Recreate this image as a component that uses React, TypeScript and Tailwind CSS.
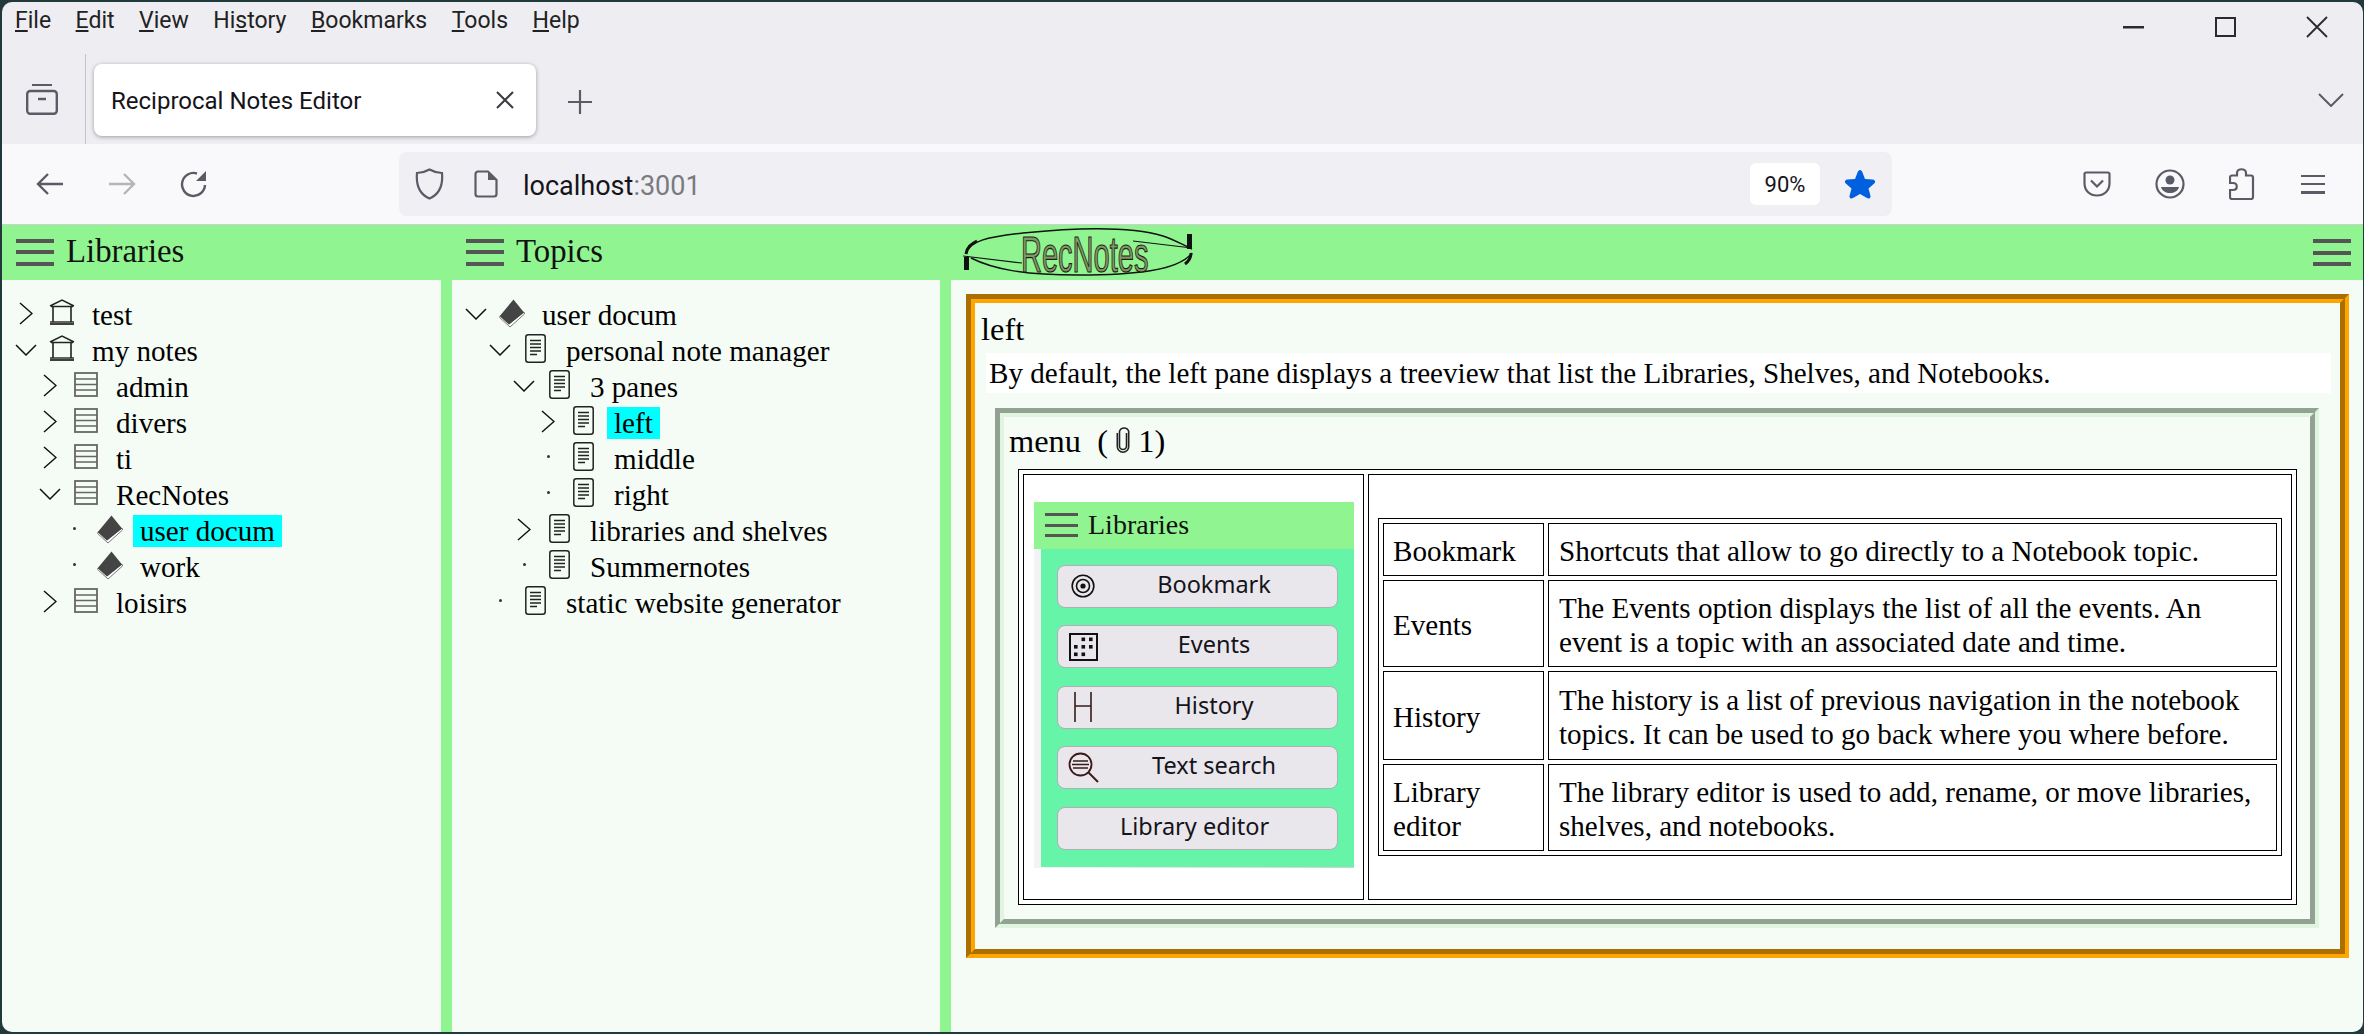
import React from 'react';

type TreeRow = {
  level: number;
  label: string;
  icon: 'library' | 'shelf' | 'book' | 'doc';
  state: 'open' | 'closed' | 'leaf';
  selected?: boolean;
};

const libraries: TreeRow[] = [
  { level: 0, label: 'test', icon: 'library', state: 'closed' },
  { level: 0, label: 'my notes', icon: 'library', state: 'open' },
  { level: 1, label: 'admin', icon: 'shelf', state: 'closed' },
  { level: 1, label: 'divers', icon: 'shelf', state: 'closed' },
  { level: 1, label: 'ti', icon: 'shelf', state: 'closed' },
  { level: 1, label: 'RecNotes', icon: 'shelf', state: 'open' },
  { level: 2, label: 'user docum', icon: 'book', state: 'leaf', selected: true },
  { level: 2, label: 'work', icon: 'book', state: 'leaf' },
  { level: 1, label: 'loisirs', icon: 'shelf', state: 'closed' },
];

const topics: TreeRow[] = [
  { level: 0, label: 'user docum', icon: 'book', state: 'open' },
  { level: 1, label: 'personal note manager', icon: 'doc', state: 'open' },
  { level: 2, label: '3 panes', icon: 'doc', state: 'open' },
  { level: 3, label: 'left', icon: 'doc', state: 'closed', selected: true },
  { level: 3, label: 'middle', icon: 'doc', state: 'leaf' },
  { level: 3, label: 'right', icon: 'doc', state: 'leaf' },
  { level: 2, label: 'libraries and shelves', icon: 'doc', state: 'closed' },
  { level: 2, label: 'Summernotes', icon: 'doc', state: 'leaf' },
  { level: 1, label: 'static website generator', icon: 'doc', state: 'leaf' },
];

const menuItems = [
  { pre: '', key: 'F', post: 'ile' },
  { pre: '', key: 'E', post: 'dit' },
  { pre: '', key: 'V', post: 'iew' },
  { pre: 'Hi', key: 's', post: 'tory' },
  { pre: '', key: 'B', post: 'ookmarks' },
  { pre: '', key: 'T', post: 'ools' },
  { pre: '', key: 'H', post: 'elp' },
];

const helpRows = [
  { name: 'Bookmark', text: 'Shortcuts that allow to go directly to a Notebook topic.', h: 'h-[53px]' },
  { name: 'Events', text: 'The Events option displays the list of all the events. An event is a topic with an associated date and time.', h: 'h-[87px]' },
  { name: 'History', text: 'The history is a list of previous navigation in the notebook topics. It can be used to go back where you where before.', h: 'h-[89px]' },
  { name: 'Library editor', text: 'The library editor is used to add, rename, or move libraries, shelves, and notebooks.', h: 'h-[87px]' },
];

const TreeIcon = ({ icon }: { icon: TreeRow['icon'] }) => {
  if (icon === 'library') {
    return (
      <svg width="26" height="26" viewBox="0 0 26 26" fill="none" className="mt-px">
        <path d="M1 7 L13 1 L25 7 M2 7.5 H24" stroke="#222" strokeWidth="1.4" />
        <path d="M4 8 V23 M22 8 V23" stroke="#222" strokeWidth="1.6" />
        <path d="M1 23 H25" stroke="#222" strokeWidth="1.4" />
        <path d="M1 25 H25" stroke="#111" strokeWidth="1.6" />
      </svg>
    );
  }
  if (icon === 'shelf') {
    return (
      <svg width="24" height="25" viewBox="0 0 24 25" fill="none" className="mt-[2px]">
        <rect x="1" y="1" width="22" height="23" stroke="#666" strokeWidth="1.8" />
        <path d="M1 7 H23 M1 12.5 H23 M1 18 H23" stroke="#666" strokeWidth="1.5" />
      </svg>
    );
  }
  if (icon === 'book') {
    return (
      <svg width="26" height="29" viewBox="0 0 26 29" fill="none" className="mt-px">
        <path d="M0.6 18.5 L11 28 L25.5 15 L25 13 L10 25 L1 17 Z" stroke="#666" strokeWidth="0.9" fill="#fff" />
        <path d="M14.5 0.5 L25 13.5 L10 25.5 L0.8 17 Z" fill="#444" />
      </svg>
    );
  }
  return (
    <svg width="21" height="29" viewBox="0 0 21 29" fill="none">
      <rect x="0.8" y="0.8" width="19.4" height="27.4" rx="2.5" stroke="#222" strokeWidth="1.5" />
      <path d="M5 6.5 H16 M5 10 H16 M5 13.5 H16 M5 17 H16 M5 20.5 H12" stroke="#222" strokeWidth="1.3" />
    </svg>
  );
};

const Chevron = ({ state }: { state: TreeRow['state'] }) => {
  if (state === 'open') {
    return (
      <svg width="22" height="12" viewBox="0 0 22 12" fill="none" className="mt-[10px]">
        <path d="M1 1 L11 11 L21 1" stroke="#111" strokeWidth="1.5" />
      </svg>
    );
  }
  if (state === 'closed') {
    return (
      <svg width="14" height="23" viewBox="0 0 14 23" fill="none" className="mt-[4px]">
        <path d="M1 1 L13 11.5 L1 22" stroke="#111" strokeWidth="1.5" />
      </svg>
    );
  }
  return <span className="mt-[13px] h-[3px] w-[3px] rounded-full bg-[#333]" />;
};

const Tree = ({ rows }: { rows: TreeRow[] }) => (
  <div className="pt-[18px]">
    {rows.map((row) => (
      <div key={row.label} className="flex h-[36px] items-start" style={{ paddingLeft: 12 + row.level * 24 }}>
        <div className="flex w-[24px] shrink-0 justify-center">
          <Chevron state={row.state} />
        </div>
        <div className="flex w-[47px] shrink-0 justify-center">
          <TreeIcon icon={row.icon} />
        </div>
        <div className="-mt-px whitespace-nowrap text-[29.1px] leading-[36px]">
          <span className={row.selected ? 'bg-[#00ffff] px-[7px]' : 'px-[7px]'}>{row.label}</span>
        </div>
      </div>
    ))}
  </div>
);

const Hamburger = ({ small }: { small?: boolean }) =>
  small ? (
    <div className="flex h-[24px] w-[33px] flex-col justify-between">
      <div className="h-[3px] bg-[#555]" />
      <div className="h-[3px] bg-[#555]" />
      <div className="h-[3px] bg-[#555]" />
    </div>
  ) : (
    <div className="flex h-[27px] w-[38px] flex-col justify-between">
      <div className="h-[4px] bg-[#555]" />
      <div className="h-[4px] bg-[#555]" />
      <div className="h-[4px] bg-[#555]" />
    </div>
  );

const Logo = () => (
  <svg width="232" height="52" viewBox="0 0 232 52" fill="none">
    <path d="M3 27 C6 14 24 10 60 6 C120 0 170 0 200 9 C212 13 220 18 229 22" stroke="#111" strokeWidth="1.4" />
    <path d="M3 27 C4 20 8 17 14 14" stroke="#111" strokeWidth="3" />
    <rect x="1" y="30" width="5" height="13" fill="#111" />
    <path d="M0 29 L59 36" stroke="#111" strokeWidth="1.2" />
    <path d="M8 31 C30 42 60 48 115 48 C170 48 215 44 229 26" stroke="#111" strokeWidth="1.4" />
    <path d="M222 37 C226 34 228 30 228 26" stroke="#111" strokeWidth="3" />
    <rect x="224" y="7" width="5" height="15" fill="#111" />
    <path d="M170 14 L229 21" stroke="#111" strokeWidth="1.2" />
    <text
      transform="translate(58 45) scale(1.21 2.09)"
      fontFamily="'Liberation Sans', sans-serif"
      fontSize="24"
      fill="#7b9c6a"
      stroke="#2b1a10"
      strokeWidth="1"
      vectorEffect="non-scaling-stroke"
    >
      RecNotes
    </text>
  </svg>
);

const Toolbar = () => (
  <div className="flex h-[80px] items-center bg-[#f9f9fb] font-['Roboto',sans-serif]">
    <svg width="28" height="24" viewBox="0 0 28 24" fill="none" className="ml-[34px]">
      <path d="M27 12 H2 M12 2 L2 12 L12 22" stroke="#5b5b66" strokeWidth="2.4" />
    </svg>
    <svg width="28" height="24" viewBox="0 0 28 24" fill="none" className="ml-[44px]">
      <path d="M1 12 H26 M16 2 L26 12 L16 22" stroke="#b4b4b9" strokeWidth="2.4" />
    </svg>
    <svg width="28" height="28" viewBox="0 0 28 28" fill="none" className="ml-[44px]">
      <path d="M25 15 A11.5 11.5 0 1 1 17 3.5" stroke="#5b5b66" strokeWidth="2.4" />
      <path d="M26 1 V11 H16 Z" fill="#5b5b66" />
    </svg>
    <div className="ml-[191px] flex h-[64px] w-[1493px] items-center rounded-lg bg-[#f0f0f4]">
      <svg width="29" height="32" viewBox="0 0 29 32" fill="none" className="ml-[16px]">
        <path d="M14.5 1.5 C10 4 6 5 2 5 C1 16 4 26 14.5 30.5 C25 26 28 16 27 5 C23 5 19 4 14.5 1.5 Z" stroke="#5b5b66" strokeWidth="2.2" />
      </svg>
      <svg width="24" height="28" viewBox="0 0 24 28" fill="none" className="ml-[30px]">
        <path d="M14 1.5 H4 A2.5 2.5 0 0 0 1.5 4 V24 A2.5 2.5 0 0 0 4 26.5 H20 A2.5 2.5 0 0 0 22.5 24 V10 Z" stroke="#5b5b66" strokeWidth="2.2" />
        <path d="M14 1.5 V10 H22.5" fill="#5b5b66" />
      </svg>
      <div className="ml-[25px] pt-[4px] text-[27px] leading-none text-[#15141a]">
        localhost<span className="text-[#7a7a80]">:3001</span>
      </div>
      <div className="ml-auto flex h-[42px] w-[70px] items-center justify-center rounded-md bg-white text-[22px] text-[#15141a]">
        90%
      </div>
      <svg width="32" height="30" viewBox="0 0 32 30" className="ml-[24px] mr-[16px]">
        <path d="M16 1 C17 1 18 2 18.5 3.5 L21 10 L28.5 10.6 C31 10.8 32 13 30.2 14.6 L24.5 19.4 L26.4 26.6 C27 29 25 30.2 23 29 L16 25 L9 29 C7 30.2 5 29 5.6 26.6 L7.5 19.4 L1.8 14.6 C0 13 1 10.8 3.5 10.6 L11 10 L13.5 3.5 C14 2 15 1 16 1 Z" fill="#0060df" />
      </svg>
    </div>
    <svg width="28" height="26" viewBox="0 0 28 26" fill="none" className="ml-[191px]">
      <path d="M3 1.5 H25 A1.5 1.5 0 0 1 26.5 3 V12 C26.5 20 21 24.5 14 24.5 C7 24.5 1.5 20 1.5 12 V3 A1.5 1.5 0 0 1 3 1.5 Z" stroke="#5b5b66" strokeWidth="2.2" />
      <path d="M8 9.5 L14 15.5 L20 9.5" stroke="#5b5b66" strokeWidth="2.2" />
    </svg>
    <svg width="30" height="30" viewBox="0 0 30 30" fill="none" className="ml-[44px]">
      <circle cx="15" cy="15" r="13.5" stroke="#5b5b66" strokeWidth="2.2" />
      <circle cx="15" cy="11" r="4.5" fill="#5b5b66" />
      <path d="M6 18 H24 C23 22 19 24 15 24 C11 24 7 22 6 18 Z" fill="#5b5b66" />
    </svg>
    <svg width="26" height="32" viewBox="0 0 26 32" fill="none" className="ml-[44px]">
      <path d="M3 7.5 H8 V5 C8 0 17 0 17 5 V7.5 H22 A2 2 0 0 1 24 9.5 V29 A2 2 0 0 1 22 31 H3 A2 2 0 0 1 1 29 V22 H4 C9 22 9 15 4 15 H1 V9.5 A2 2 0 0 1 3 7.5 Z" stroke="#5b5b66" strokeWidth="2.2" />
    </svg>
    <div className="ml-[46px] flex h-[19px] w-[24px] flex-col justify-between">
      <div className="h-[2.5px] bg-[#5b5b66]" />
      <div className="h-[2.5px] bg-[#5b5b66]" />
      <div className="h-[2.5px] bg-[#5b5b66]" />
    </div>
  </div>
);

const TitleBars = () => (
  <div className="h-[142px] bg-[#eeeef2] font-['Roboto',sans-serif]">
    <div className="flex h-[42px] items-center">
      <div className="mb-[6px] ml-[13px] flex w-[570px] gap-[24.5px] text-[23px] leading-none text-[#222]">
        {menuItems.map((m) => (
          <span key={m.pre + m.key + m.post}>
            {m.pre}
            <span className="underline underline-offset-2">{m.key}</span>
            {m.post}
          </span>
        ))}
      </div>
      <svg width="21" height="3" viewBox="0 0 21 3" className="ml-[1538px] mt-[8px]">
        <rect width="21" height="2.5" fill="#2b2b2b" />
      </svg>
      <svg width="21" height="20" viewBox="0 0 21 20" fill="none" className="ml-[71px] mt-[8px]">
        <rect x="1" y="1" width="19" height="18" stroke="#2b2b2b" strokeWidth="2" />
      </svg>
      <svg width="22" height="22" viewBox="0 0 22 22" fill="none" className="ml-[70px] mt-[8px]">
        <path d="M1 1 L21 21 M21 1 L1 21" stroke="#2b2b2b" strokeWidth="1.8" />
      </svg>
    </div>
    <div className="flex h-[100px] items-start">
      <svg width="32" height="32" viewBox="0 0 32 32" fill="none" className="ml-[24px] mt-[39px]">
        <path d="M6 2 H26" stroke="#5b5b66" strokeWidth="2.2" />
        <rect x="1.2" y="8" width="29.6" height="22.8" rx="3" stroke="#5b5b66" strokeWidth="2.4" />
        <path d="M12 16 H20" stroke="#5b5b66" strokeWidth="2.6" />
      </svg>
      <div className="ml-[27px] mt-[10px] h-[90px] w-px bg-[#c4c4c8]" />
      <div className="ml-[8px] mt-[20px] flex h-[72px] w-[442px] items-center justify-between rounded-lg bg-white pl-[17px] pr-[22px] shadow-[0_1px_4px_rgba(0,0,0,0.35)]">
        <span className="pt-[2px] text-[24px] text-[#15141a]">Reciprocal Notes Editor</span>
        <svg width="18" height="18" viewBox="0 0 18 18" fill="none">
          <path d="M1 1 L17 17 M17 1 L1 17" stroke="#3a3a40" strokeWidth="2" />
        </svg>
      </div>
      <svg width="24" height="24" viewBox="0 0 24 24" fill="none" className="ml-[32px] mt-[46px]">
        <path d="M12 0 V24 M0 12 H24" stroke="#5b5b66" strokeWidth="2.2" />
      </svg>
      <svg width="26" height="14" viewBox="0 0 26 14" fill="none" className="ml-[1726px] mt-[49px]">
        <path d="M1 1 L13 13 L25 1" stroke="#5b5b66" strokeWidth="2" />
      </svg>
    </div>
  </div>
);

const MiniButton = ({ icon, label }: { icon?: React.ReactNode; label: string }) => (
  <div className="flex h-[43px] items-center rounded-[8px] border border-[#b0aeb6] bg-[#e9e7ec] font-['Noto_Sans',sans-serif] text-[23.5px] text-[#15141a]">
    {icon ? <div className="ml-[17px] flex w-[16px] shrink-0 justify-center [&>svg]:shrink-0">{icon}</div> : null}
    <div className={icon ? 'flex-1 pb-[3px] text-center leading-none' : 'flex-1 pb-[3px] pr-[6px] text-center leading-none'}>{label}</div>
  </div>
);

const MiniMenu = () => (
  <div className="w-[320px]">
    <div className="flex h-[47px] items-center gap-[10px] bg-[#90f590] pl-[11px] text-[28px] text-[#111]">
      <Hamburger small />
      Libraries
    </div>
    <div className="bg-linear-to-r from-[#f4f4f4] to-[#cfd3cf] pl-[7px] pb-px">
      <div className="flex flex-col gap-[17.5px] bg-[#66f4a8] p-[16px] pb-[17px]">
        <MiniButton
          label="Bookmark"
          icon={
            <svg width="24" height="24" viewBox="0 0 24 24" fill="none">
              <circle cx="12" cy="12" r="10.8" stroke="#111" strokeWidth="1.6" />
              <circle cx="12" cy="12" r="6.5" stroke="#111" strokeWidth="1.6" />
              <circle cx="12" cy="12" r="2.6" fill="#111" />
            </svg>
          }
        />
        <MiniButton
          label="Events"
          icon={
            <svg width="29" height="28" viewBox="0 0 29 28" fill="none">
              <rect x="1" y="1" width="27" height="26" stroke="#111" strokeWidth="2" />
              <g fill="#111">
                <rect x="12.5" y="4.5" width="3.6" height="3.6" />
                <rect x="20" y="4.5" width="3.6" height="3.6" />
                <rect x="5" y="12" width="3.6" height="3.6" />
                <rect x="12.5" y="12" width="3.6" height="3.6" />
                <rect x="20" y="12" width="3.6" height="3.6" />
                <rect x="5" y="19.5" width="3.6" height="3.6" />
                <rect x="12.5" y="19.5" width="3.6" height="3.6" />
              </g>
            </svg>
          }
        />
        <MiniButton
          label="History"
          icon={
            <svg width="20" height="30" viewBox="0 0 20 30" fill="none">
              <path d="M2 0 V30 M18 0 V30 M2 14 H18" stroke="#3a1a1a" strokeWidth="1.6" />
            </svg>
          }
        />
        <MiniButton
          label="Text search"
          icon={
            <svg width="31" height="31" viewBox="0 0 31 31" fill="none">
              <circle cx="12.5" cy="12.5" r="11" stroke="#3a1a1a" strokeWidth="1.8" />
              <path d="M5 9 H20 M4 12.5 H21 M5 16 H20" stroke="#3a1a1a" strokeWidth="1.4" />
              <path d="M20 20 L30 30" stroke="#3a1a1a" strokeWidth="2" />
            </svg>
          }
        />
        <MiniButton label="Library editor" />
      </div>
    </div>
  </div>
);

const HelpTable = () => (
  <table className="w-[904px] table-fixed border-separate border-spacing-[4px] border border-black bg-white text-[29.1px] leading-[34px]">
    <tbody>
      {helpRows.map((row) => (
        <tr key={row.name}>
          <td className={`w-[161px] border border-black px-[9px] pt-[2px] ${row.h}`}>{row.name}</td>
          <td className={`border border-black px-[10px] pt-[2px] ${row.h}`}>{row.text}</td>
        </tr>
      ))}
    </tbody>
  </table>
);

export default function App() {
  return (
    <div className="h-[1034px] w-[2364px] overflow-hidden bg-[#22393c] pb-[2px] pl-[2px] pr-px pt-[2px] font-['Liberation_Serif',serif] text-black">
      <div className="flex h-full flex-col overflow-hidden rounded-[10px]">
        <TitleBars />
        <Toolbar />
        <div className="h-px bg-[#cfcfd3]" />
        <div className="flex min-h-0 flex-1 bg-[#f5fcf5]">
          <div className="flex w-[450px] shrink-0 flex-col">
            <div className="flex h-[55px] items-center gap-[12px] bg-[#90f590] pb-[1px] pl-[14px] text-[32.8px] text-[#111]">
              <Hamburger />
              Libraries
            </div>
            <div className="flex-1 border-r-[11px] border-[#90f590]">
              <Tree rows={libraries} />
            </div>
          </div>
          <div className="flex w-[499px] shrink-0 flex-col">
            <div className="flex h-[55px] items-center gap-[12px] bg-[#90f590] pb-[1px] pl-[14px] text-[32.8px] text-[#111]">
              <Hamburger />
              Topics
            </div>
            <div className="flex-1 border-r-[11px] border-[#90f590]">
              <Tree rows={topics} />
            </div>
          </div>
          <div className="min-w-0 flex-1">
            <div className="flex h-[55px] items-center justify-between bg-[#90f590] pl-[12px] pr-[12px]">
              <Logo />
              <Hamburger />
            </div>
            <div className="pl-[15px] pr-[14px] pt-[14px]">
              <div className="h-[664px] border-[9px] border-[#ffa500] [border-style:groove]">
                <div className="h-[50px] pl-[6px] pt-[6px] text-[32.4px] leading-[40px]">left</div>
                <div className="ml-[11px] mr-[9px] flex h-[40px] items-center bg-white pl-[3px] pt-[2px] text-[29.1px]">
                  By default, the left pane displays a treeview that list the Libraries, Shelves, and Notebooks.
                </div>
                <div className="ml-[20px] mr-[21px] mt-[15px] h-[520px] border-[9px] border-[#e0f5e0] [border-style:groove]">
                  <div className="h-[52px] whitespace-pre pl-[5px] pt-[4px] text-[32.4px] leading-[40px]">
                    menu{'  '}({' '}
                    <svg width="14" height="28" viewBox="0 0 14 28" fill="none" className="mb-[10px] inline-block">
                      <path d="M10.5 7 V20 A3.5 3.5 0 0 1 3.5 20 V5.5 A4.8 4.8 0 0 1 12.7 5.5 V20.5 A5.7 5.7 0 0 1 1.3 20.5 V7" stroke="#222" strokeWidth="1.6" />
                    </svg>
                    {' '}1)
                  </div>
                  <table className="ml-[14px] w-[1279px] table-fixed border-separate border-spacing-[4px] border border-black bg-white">
                    <tbody>
                      <tr>
                        <td className="h-[426px] w-[341px] border border-black pb-[5px] pl-[10px]">
                          <MiniMenu />
                        </td>
                        <td className="h-[426px] border border-black pl-[9px] align-middle">
                          <HelpTable />
                        </td>
                      </tr>
                    </tbody>
                  </table>
                </div>
              </div>
            </div>
          </div>
        </div>
      </div>
    </div>
  );
}
